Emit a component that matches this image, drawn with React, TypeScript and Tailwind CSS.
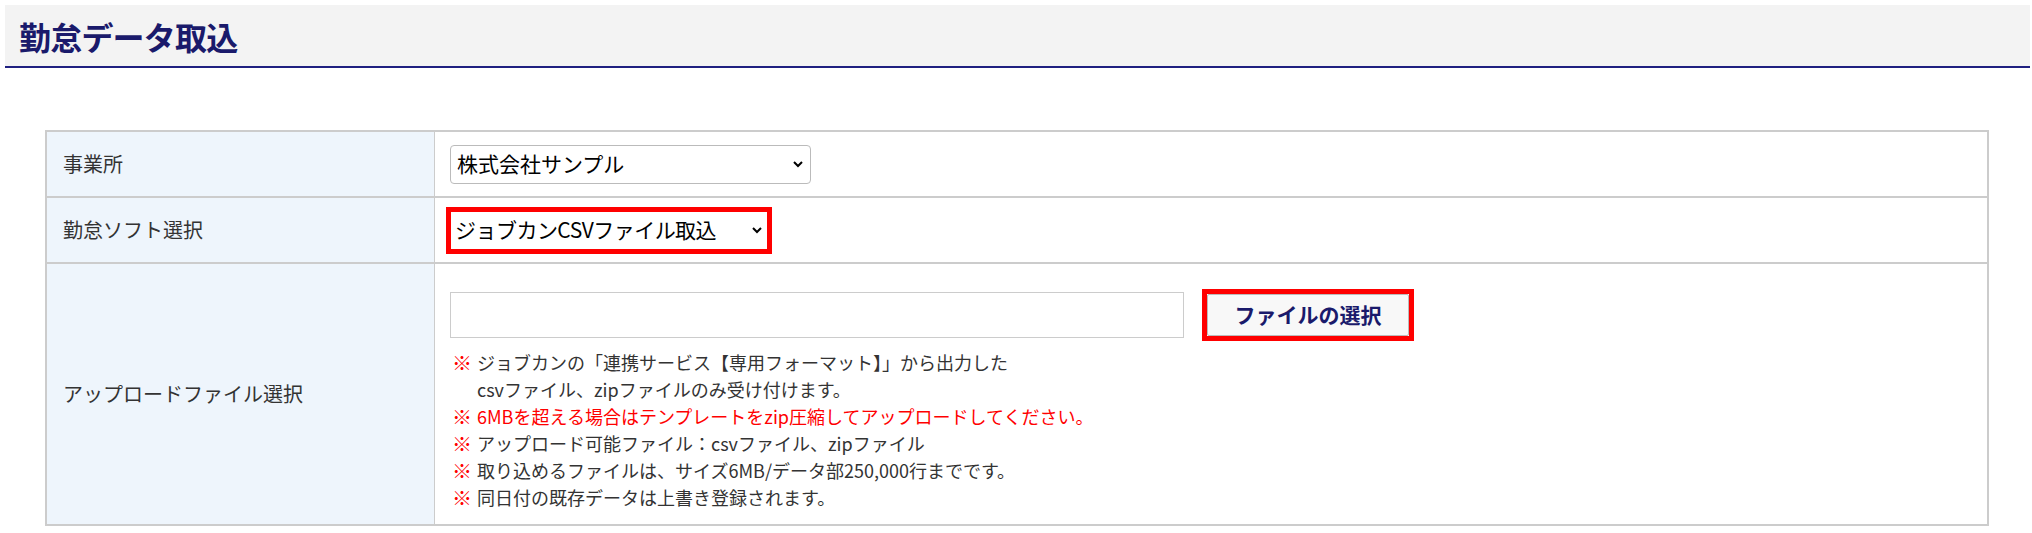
export default function App() {
  const f = { fontFamily: '"Noto Sans CJK JP", "Noto Sans", sans-serif' };
  const notes: [string, boolean][] = [
    ["ジョブカンの「連携サービス【専用フォーマット】」から出力した", false],
    ["6MBを超える場合はテンプレートをzip圧縮してアップロードしてください。", true],
    ["アップロード可能ファイル：csvファイル、zipファイル", false],
    ["取り込めるファイルは、サイズ6MB/データ部250,000行までです。", false],
    ["同日付の既存データは上書き登録されます。", false],
  ];
  return (
    <div style={f} className="w-[2032px] h-[533px] bg-white text-[#333]">
      <div className="mt-[5px] ml-[5px] mr-[2px] h-[63px] bg-[#f3f3f3] border-b-2 border-[#1f2080] flex items-center pl-[14px]">
        <h1 className="text-[32px] font-bold text-[#1a1a6b] tracking-tight">勤怠データ取込</h1>
      </div>
      <div className="mt-[62px] ml-[45px] w-[1944px] border-2 border-[#ccc]">
        <div className="flex h-[66px] border-b-2 border-[#ccc]">
          <div className="w-[388px] bg-[#eef5fc] border-r border-[#ccc] flex items-center pl-[16px] text-[20px]">事業所</div>
          <div className="flex-1 flex items-center pl-[15px]">
            <div className="w-[361px] h-[39px] border border-[#bbb] rounded-[4px] flex items-center justify-between px-[6px] text-[21px] text-black">
              <span>株式会社サンプル</span>
              <svg width="12" height="12" viewBox="0 0 12 12"><path d="M2 4l4 4 4-4" stroke="#000" strokeWidth="2" fill="none"/></svg>
            </div>
          </div>
        </div>
        <div className="flex h-[66px] border-b-2 border-[#ccc]">
          <div className="w-[388px] bg-[#eef5fc] border-r border-[#ccc] flex items-center pl-[16px] text-[20px]">勤怠ソフト選択</div>
          <div className="flex-1 flex items-center pl-[11px]">
            <div className="w-[326px] h-[47px] border-[5px] border-[#ff0000] flex items-center justify-between px-[4px] text-[21px] text-black">
              <span className="tracking-tight">ジョブカンCSVファイル取込</span>
              <svg width="12" height="12" viewBox="0 0 12 12"><path d="M2 4l4 4 4-4" stroke="#000" strokeWidth="2" fill="none"/></svg>
            </div>
          </div>
        </div>
        <div className="flex h-[260px]">
          <div className="w-[388px] bg-[#eef5fc] border-r border-[#ccc] flex items-center pl-[16px] text-[20px]">アップロードファイル選択</div>
          <div className="flex-1 pl-[15px] pt-[25px]">
            <div className="flex items-center">
              <div className="w-[734px] h-[46px] border border-[#ccc]"></div>
              <div className="ml-[18px] w-[212px] h-[52px] border-[5px] border-[#ff0000] flex items-center justify-center">
                <div className="w-full h-full border border-[#bbb] rounded-[2px] bg-[#f8f8f8] flex items-center justify-center text-[21px] font-bold text-[#1a1a6b]">ファイルの選択</div>
              </div>
            </div>
            <div className="mt-[8px] text-[18px] leading-[27px]">
              {notes.map(([t, red], i) => (
                <div key={i}>
                  <div className="flex">
                    <span className="w-[27px] text-[#ff0000] font-bold text-[20px] pl-[2px]">※</span>
                    <span className={red ? "text-[#ff0000]" : "text-[#333]"}>{t}</span>
                  </div>
                  {i === 0 && <div className="pl-[27px]">csvファイル、zipファイルのみ受け付けます。</div>}
                </div>
              ))}
            </div>
          </div>
        </div>
      </div>
    </div>
  );
}
